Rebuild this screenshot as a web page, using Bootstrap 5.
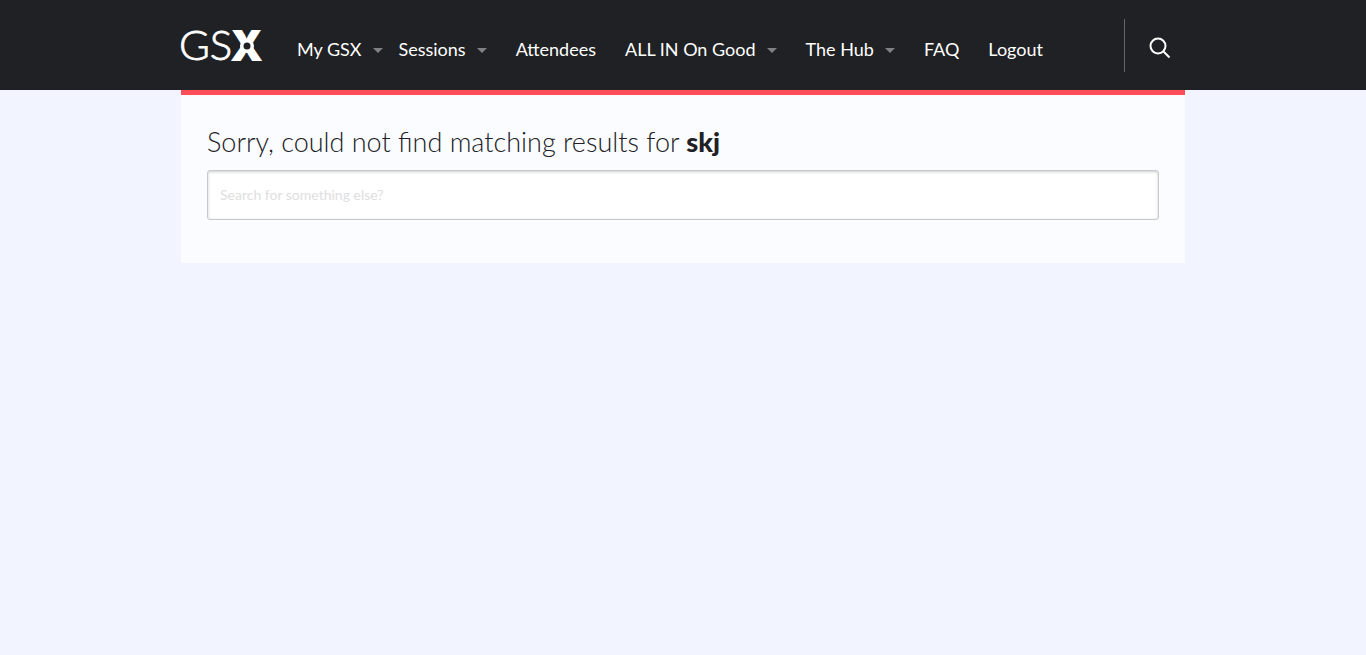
<!DOCTYPE html>
<html lang="en">
<head>
<meta charset="utf-8">
<meta name="viewport" content="width=device-width, initial-scale=1">
<title>GSX – Search</title>
<link href="https://cdn.jsdelivr.net/npm/bootstrap@5.3.0/dist/css/bootstrap.min.css" rel="stylesheet">
<style>
  body { background: #f2f4ff; color: #202124; font-family: Lato, "Open Sans", sans-serif; }
  .site-header { background: #202124; min-height: 90px; }
  .page-width { max-width: 1004px; }
  .main-nav { font-size: 18px; line-height: 24px; gap: 8px 29px; padding: 7px 0 0 34px; }
  .main-nav a { color: #fff; text-decoration: none; }
  .main-nav .dropdown-toggle::after { margin-left: 11px; vertical-align: 3px; border: solid transparent; border-width: 5px 5px 0; border-top-color: #808184; }
  .main-nav .first-item { margin-right: -13px; }
  .search-toggle { border: 0; border-left: 1px solid #66676a; background: none; height: 53px; padding: 5px 14px 0 24px; }
  .results { background: #fbfcff; border-top: 5px solid #ff4d5a; padding: 29px 26px 43px; }
  .results h1 { font-size: 27px; line-height: 35px; font-weight: 300; margin-bottom: 11px; }
  .results h1 b { font-weight: 900; }
  .search-box { height: 50px; padding: 0 12px 2px; font-size: 14px; line-height: 24px; border: 1px solid #c8c9cc; border-radius: 3px; box-shadow: inset 0 1px 3px rgba(0,0,0,.2); }
  .search-box::placeholder { color: #dedede; }
</style>
</head>
<body>
<header class="site-header d-flex align-items-center">
  <div class="page-width container-fluid p-0 d-flex align-items-center">
    <a href="#" class="flex-shrink-0 d-flex" aria-label="GSX home">
      <svg class="overflow-visible" width="82" height="52" viewBox="0 0 82 52" fill="#fff">
        <text x="-2" y="41" font-family="Lato" font-weight="300" font-size="42" stroke="#fff" stroke-width=".8">GS</text>
        <text x="49" y="42" font-family="Inter" font-weight="900" font-size="42">X</text>
        <circle cx="66" cy="27" r="7"/>
        <circle cx="66" cy="27" r="3.500" fill="#202124"/>
      </svg>
    </a>
    <nav class="main-nav d-flex flex-wrap" aria-label="Main">
      <a href="#" class="dropdown-toggle first-item">My GSX</a>
      <a href="#" class="dropdown-toggle">Sessions</a>
      <a href="#">Attendees</a>
      <a href="#" class="dropdown-toggle">ALL IN On Good</a>
      <a href="#" class="dropdown-toggle">The Hub</a>
      <a href="#">FAQ</a>
      <a href="#">Logout</a>
    </nav>
    <button type="button" class="search-toggle ms-auto d-flex align-items-center" aria-label="Search">
      <svg width="22" height="22" viewBox="0 0 22 22" fill="none" stroke="#fff" stroke-width="2"><circle cx="9" cy="9" r="7.500"/><path d="M14 14l6.500 6.500"/></svg>
    </button>
  </div>
</header>
<main class="page-width container-fluid results">
  <h1 id="results-title">Sorry, could not find matching results for <b>skj</b></h1>
  <form role="search">
    <input type="search" class="form-control search-box" aria-label="Search for something else" placeholder="Search for something else?">
  </form>
</main>
<script src="https://cdn.jsdelivr.net/npm/bootstrap@5.3.0/dist/js/bootstrap.bundle.min.js"></script>
</body>
</html>
